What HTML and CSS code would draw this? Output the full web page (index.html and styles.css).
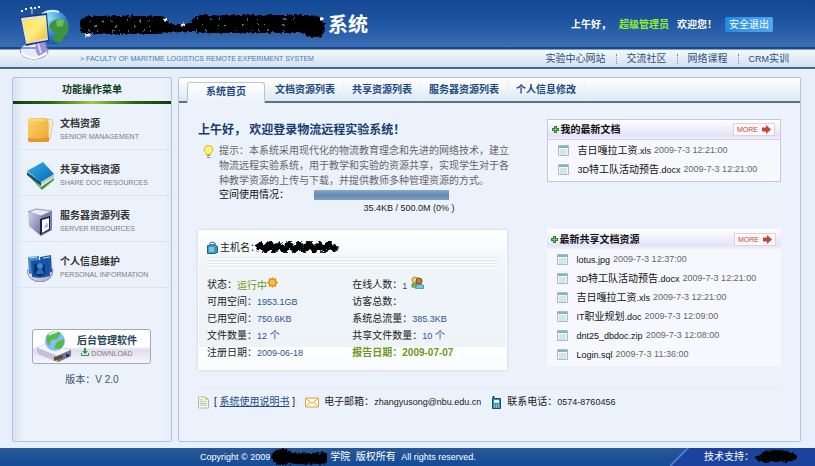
FILE: index.html
```html
<!DOCTYPE html>
<html lang="zh-CN">

<head>
    <meta charset="UTF-8">
    <meta name="viewport" content="width=device-width, initial-scale=1.0">
    <title>物流远程实验系统</title>
    <link rel="stylesheet" href="styles.css">
</head>

<body>
    <!-- Shared shapes -->
    <svg class="defs" width="0" height="0" aria-hidden="true">
        <defs>
            <filter id="rough" x="-5%" y="-50%" width="110%" height="200%">
                <feTurbulence type="fractalNoise" baseFrequency="0.35" numOctaves="2" seed="4" />
                <feDisplacementMap in="SourceGraphic" scale="5" xChannelSelector="R" yChannelSelector="G" />
            </filter>
            <linearGradient id="yellow" x1="0" y1="0" x2="1" y2="1">
                <stop offset="0" stop-color="#f8e24c" />
                <stop offset="0.5" stop-color="#ffec84" />
                <stop offset="1" stop-color="#f0b92a" />
            </linearGradient>
            <linearGradient id="folder" x1="0" y1="0" x2="1" y2="1">
                <stop offset="0" stop-color="#fbd36a" />
                <stop offset="1" stop-color="#eda52f" />
            </linearGradient>
            <radialGradient id="globe" cx="0.4" cy="0.25" r="0.8">
                <stop offset="0" stop-color="#9be3fa" />
                <stop offset="0.5" stop-color="#3b92d8" />
                <stop offset="1" stop-color="#14509c" />
            </radialGradient>
            <linearGradient id="metal" x1="0" y1="0" x2="1" y2="1">
                <stop offset="0" stop-color="#ffffff" />
                <stop offset="1" stop-color="#9a9fc4" />
            </linearGradient>
            <linearGradient id="server" x1="0" y1="0" x2="1" y2="1">
                <stop offset="0" stop-color="#d4d4ec" />
                <stop offset="1" stop-color="#6b6b9c" />
            </linearGradient>
            <linearGradient id="book" x1="0" y1="0" x2="1" y2="1">
                <stop offset="0" stop-color="#36b0ea" />
                <stop offset="1" stop-color="#0868b0" />
            </linearGradient>
            <symbol id="doc" viewBox="0 0 11 11">
                <path d="M.5.5h10v10H.5z" fill="#f4fafa" stroke="#a4bdc6" />
                <path d="M1 1h9v2H1z" fill="#7fb5c9" />
                <path d="M2 5h7M2 7h7M2 9h7" stroke="#b3d3d3" />
            </symbol>
            <symbol id="plus" viewBox="0 0 7 7">
                <path d="M2 0h3v2h2v3H5v2H2V5H0V2h2z" fill="#2b8430" />
                <path d="M3 1h1v2h2v1H4v2H3V4H1V3h2z" fill="#74c468" />
            </symbol>
            <symbol id="arrow" viewBox="0 0 9 9">
                <path d="M0 2.500h4V0l5 4.500L4 9V6.500H0z" fill="#c9452f" />
            </symbol>
        </defs>
    </svg>

    <header class="header">
        <svg class="logo" viewBox="0 0 52 58" aria-hidden="true">
            <circle cx="32" cy="22" r="17" fill="url(#globe)" />
            <path d="M31 17q7-5 14-2 5 6 3 12l-7 10q-6 2-8-3l2-6q-5-3-6-6z" fill="#3d9440" />
            <path d="M36 16q5-3 8-1l-1 6-6 1z" fill="#6dba58" />
            <path d="M22 9q8-5 17-2" fill="none" stroke="#c7f2ff" stroke-width="2" />
            <ellipse cx="14" cy="46" rx="14" ry="8" fill="#e6e9f7" stroke="#7d88b8" />
            <path d="M1 48q12 10 26 0" fill="none" stroke="#fff" stroke-width="2" />
            <path d="M0 43h28" stroke="#20488c" />
            <path d="M16 37l9-1 2 10-8 5q-5-4-3-14z" fill="#9c92d6" />
            <path d="M18 38l3 10" stroke="#dcd7f6" stroke-width="2" />
            <path d="M0 12l27-4 2 28-23 5z" fill="#1f3768" />
            <path d="M1 13l25-3 2 25-22 4z" fill="#d5dff2" />
            <path d="M3 15l22-3 2 21-20 5z" fill="url(#yellow)" />
            <path d="M12 9V3" stroke="#c4d4f0" />
            <path d="M1 6h2M5 4h2M10 3h2M14 3h2M18 2h2" stroke="#fff" stroke-width="2" />
        </svg>
        <div class="header-right">
            <div class="top">
                <h1 class="title">
                    <svg class="scribble" viewBox="0 0 246 28" aria-hidden="true">
                        <g filter="url(#rough)">
                            <path d="M8 14h72M120 13h110" fill="none" stroke="#000" stroke-width="18" stroke-linecap="round" />
                            <path d="M80 17h35" stroke="#000" stroke-width="8" />
                            <circle cx="234" cy="16" r="11" />
                            <path d="M84 9h3M101 14h4M5 24h5M240 8h3" stroke="#fff" stroke-width="3" />
                            <path d="M10 10h66M118 8h100" stroke="#a9bad8" stroke-dasharray="1 11 2 7 1 15" />
                            <path d="M14 15h60M122 14h90" stroke="#e8eef8" stroke-dasharray="2 13 1 6 1 17" />
                            <path d="M8 20h68M116 19h88" stroke="#a9bad8" stroke-dasharray="1 8 2 14 1 5" />
                        </g>
                    </svg>系统
                </h1>
                <div class="welcome">
                    <span>上午好，</span>
                    <span class="user">超级管理员</span>
                    <span>欢迎您！</span>
                    <button class="logout" type="button">安全退出</button>
                </div>
            </div>
            <div class="subbar">
                <p class="subtitle">&gt; FACULTY OF MARITIME LOGISTICS REMOTE EXPERIMENT SYSTEM</p>
                <nav class="links">
                    <a href="#">实验中心网站</a>
                    <a href="#">交流社区</a>
                    <a href="#">网络课程</a>
                    <a href="#"><span class="en">CRM</span>实训</a>
                </nav>
            </div>
        </div>
    </header>

    <div class="wrap">
        <!-- Left menu -->
        <aside class="sidebar">
            <h2 class="menu-title">功能操作菜单</h2>
            <a class="menu-item" href="#">
                <svg class="menu-icon" viewBox="0 0 28 28" aria-hidden="true">
                    <path d="M18 4l6-1 2 3-3 17-6 2z" fill="#f8f2df" stroke="#d6c69a" />
                    <path d="M22 5v8l-2 4" fill="none" stroke="#e6bd62" />
                    <path d="M1 4q0-2 2-2h15q3 0 3 2l1 20q0 2-2 2H3q-2 0-2-2z" fill="url(#folder)" />
                    <path d="M1 22q8 2 21-1v3q0 2-2 2H3q-2 0-2-2z" fill="#e3982c" />
                    <path d="M3 4h15" stroke="#ffe9a4" />
                </svg>
                <span>
                    <strong>文档资源</strong>
                    <small>SENIOR MANAGEMENT</small>
                </span>
            </a>
            <a class="menu-item" href="#">
                <svg class="menu-icon" viewBox="0 0 28 28" aria-hidden="true">
                    <path d="M2 14l13 14 12-10v-4L10 12z" fill="#4d9a35" />
                    <path d="M1 12l13 13 13-9v-4L9 7z" fill="#e9f3e2" />
                    <path d="M0 10v3l14 11v-4z" fill="#095182" />
                    <path d="M14 20l13-8v3l-13 8z" fill="#b8c8d2" />
                    <path d="M0 9L16 0l11 12-13 8z" fill="url(#book)" />
                </svg>
                <span>
                    <strong>共享文档资源</strong>
                    <small>SHARE DOC RESOURCES</small>
                </span>
            </a>
            <a class="menu-item" href="#">
                <svg class="menu-icon" viewBox="0 0 28 28" aria-hidden="true">
                    <path d="M1 4l8-3 16 2-11 5z" fill="#e8e8f8" stroke="#9292b6" />
                    <path d="M1 4l13 4v20L2 18z" fill="url(#server)" />
                    <path d="M14 8l11-5v19l-11 6z" fill="#7c7ba9" />
                    <path d="M13 11l10-3v14l-10 5z" fill="#1d213c" />
                    <path d="M15 12l7-2v11l-7 4z" fill="#f4f6ff" />
                    <path d="M17 20l3-6 1 5z" fill="#a9adc6" />
                </svg>
                <span>
                    <strong>服务器资源列表</strong>
                    <small>SERVER RESOURCES</small>
                </span>
            </a>
            <a class="menu-item" href="#">
                <svg class="menu-icon" viewBox="0 0 28 28" aria-hidden="true">
                    <path d="M0 16q13 5 26-1 0 12-13 13Q1 27 0 16z" fill="url(#metal)" stroke="#858da5" />
                    <path d="M1 3l11-1 1 17-11 1z" fill="#4686c6" />
                    <path d="M13 3l11-2 1 17-11 2z" fill="#1f59a2" />
                    <path d="M4 7l18-2 1 17q-9 3-18 1z" fill="#1454a8" />
                    <path d="M7 10l6-1 5 2v9l-5 3-6-3z" fill="#0b2f6e" />
                    <circle cx="13" cy="12" r="3" fill="#3d86cf" />
                    <path d="M9 20q1-5 4-5t4 5z" fill="#2a6cc0" />
                    <path d="M2 4l8-1M16 4l7-1" stroke="#b9dbf5" />
                </svg>
                <span>
                    <strong>个人信息维护</strong>
                    <small>PERSONAL INFORMATION</small>
                </span>
            </a>
            <button class="download" type="button">
                <svg class="download-icon" viewBox="0 0 35 33" aria-hidden="true">
                    <path d="M0 18l9-5 25 7v6l-13 6L1 23z" fill="#8585a8" />
                    <path d="M0 18l9-5 25 7-14 6z" fill="#f3f2fa" />
                    <path d="M0 18l20 8v6L1 24z" fill="#c4c2d8" />
                    <path d="M20 26l14-6v6l-13 6z" fill="#77769a" />
                    <path d="M17 27l9-2v3l-9 3z" fill="#604d26" />
                    <path d="M29 24h3v3h-3z" fill="#29334b" />
                    <circle cx="18" cy="11" r="10" fill="#8bbcf0" />
                    <path d="M10 5q8-6 14-2l-4 6-6 1-2 6q-4-5-2-11zM20 12l7-3q1 6-4 10l-6-1z" fill="#4fbd48" />
                    <path d="M12 5q4-3 8-3" fill="none" stroke="#d7ffd0" stroke-width="2" />
                </svg>
                <span>
                    <strong>后台管理软件</strong>
                    <small><svg width="8" height="8" viewBox="0 0 8 8" aria-hidden="true">
                            <path d="M3 0h2v3h2L4 6 1 3h2zM0 5h1v2h6V5h1v3H0z" fill="#329a42" />
                        </svg> DOWNLOAD</small>
                </span>
            </button>
            <p class="version">版本：V 2.0</p>
        </aside>

        <main class="main">
            <nav class="tabs">
                <a class="tab active" href="#">系统首页</a>
                <a class="tab" href="#">文档资源列表</a>
                <a class="tab" href="#">共享资源列表</a>
                <a class="tab" href="#">服务器资源列表</a>
                <a class="tab" href="#">个人信息修改</a>
            </nav>

            <div class="content">
                <div class="columns">
                    <section>
                        <h2 class="hello">上午好， 欢迎登录物流远程实验系统！</h2>
                        <div class="tip">
                            <svg class="bulb" viewBox="0 0 11 13" aria-hidden="true">
                                <path d="M5.500.5a4 4 0 0 1 3 7l-1 2h-4l-1-2a4 4 0 0 1 3-7z" fill="#fff36b" stroke="#cfb638" />
                                <path d="M4 10.500h3M4 12.500h3" stroke="#7e8795" />
                            </svg>
                            <div class="tip-body">
                                <p class="tip-text">提示：本系统采用现代化的物流教育理念和先进的网络技术，建立物流远程实验系统，用于教学和实验的资源共享，实现学生对于各种教学资源的上传与下载，并提供教师多种管理资源的方式。</p>
                                <div class="usage">
                                    <span>空间使用情况：</span>
                                    <span class="usage-bar"></span>
                                </div>
                                <p class="usage-text">35.4KB / 500.0M (0% )</p>
                            </div>
                        </div>

                        <div class="stats">
                            <div class="host">
                                <svg class="icon" viewBox="0 0 11 13" aria-hidden="true">
                                    <path d="M3 4V2q2-2 5 0v3" fill="none" stroke="#346687" />
                                    <path d="M.5 4.500l7-1 3 2v6l-3 1h-7z" fill="#399bc1" stroke="#245f80" />
                                    <path d="M2 6h5v5H2z" fill="#72c6df" />
                                </svg>
                                <span>主机名：</span>
                                <svg class="scribble-small" viewBox="0 0 88 12" aria-hidden="true">
                                    <path d="M2 7l5-3 4 5 5-6 4 6 5-5 5 5 5-6 5 6 5-5 5 5 5-6 5 6 5-5 5 5 5-6 5 5 3-3" fill="none" stroke="#000" stroke-width="6" filter="url(#rough)" />
                                </svg>
                            </div>
                            <div class="stripes"></div>
                            <dl class="stat-list">
                                <div>
                                    <dt>状态：</dt>
                                    <dd class="running">运行中<svg class="icon" viewBox="0 0 12 12" aria-hidden="true">
                                            <path d="M6 0l1.500 2L10 1v3l2 2-2 2v3l-2.500-1L6 12l-1.500-2L2 11V8L0 6l2-2V1l2.500 1z" fill="#e98a1b" />
                                            <circle cx="6" cy="6" r="3" fill="#ffc83d" />
                                        </svg></dd>
                                </div>
                                <div>
                                    <dt>在线人数：</dt>
                                    <dd><span class="en">1</span> <svg class="icon wide" viewBox="0 0 14 13" aria-hidden="true">
                                            <path d="M1 9q2-4 6-2l1 4-6 1z" fill="#68af58" />
                                            <circle cx="5" cy="4" r="3" fill="#f2d57c" stroke="#a18836" />
                                            <path d="M5 12q1-4 5-4t4 4q-5 2-9 0z" fill="#7fc3df" stroke="#4b8baa" />
                                            <circle cx="9" cy="5" r="3" fill="#c47c32" stroke="#75451d" />
                                        </svg></dd>
                                </div>
                                <div>
                                    <dt>可用空间：</dt>
                                    <dd><span class="en">1953.1GB</span></dd>
                                </div>
                                <div>
                                    <dt>访客总数：</dt>
                                    <dd></dd>
                                </div>
                                <div>
                                    <dt>已用空间：</dt>
                                    <dd><span class="en">750.6KB</span></dd>
                                </div>
                                <div>
                                    <dt>系统总流量：</dt>
                                    <dd><span class="en">385.3KB</span></dd>
                                </div>
                                <div>
                                    <dt>文件数量：</dt>
                                    <dd><span class="en">12</span> 个</dd>
                                </div>
                                <div>
                                    <dt>共享文件数量：</dt>
                                    <dd><span class="en">10</span> 个</dd>
                                </div>
                                <div>
                                    <dt>注册日期：</dt>
                                    <dd><span class="en">2009-06-18</span></dd>
                                </div>
                                <div class="report">
                                    <dt>报告日期：</dt>
                                    <dd>2009-07-07</dd>
                                </div>
                            </dl>
                        </div>
                    </section>

                    <section class="docs">
                        <div class="card bordered">
                            <div class="card-head">
                                <h3><svg class="plus" aria-hidden="true"><use href="#plus" /></svg>我的最新文档</h3>
                                <a class="more" href="#">MORE <svg class="arrow" aria-hidden="true"><use href="#arrow" /></svg></a>
                            </div>
                            <ul class="files">
                                <li><svg class="doc" aria-hidden="true"><use href="#doc" /></svg><a href="#">吉日嘎拉工资<span class="en">.xls</span></a> <time>2009-7-3 12:21:00</time></li>
                                <li><svg class="doc" aria-hidden="true"><use href="#doc" /></svg><a href="#"><span class="en">3D</span>特工队活动预告<span class="en">.docx</span></a> <time>2009-7-3 12:21:00</time></li>
                            </ul>
                        </div>

                        <div class="card">
                            <div class="card-head">
                                <h3><svg class="plus" aria-hidden="true"><use href="#plus" /></svg>最新共享文档资源</h3>
                                <a class="more" href="#">MORE <svg class="arrow" aria-hidden="true"><use href="#arrow" /></svg></a>
                            </div>
                            <ul class="files">
                                <li><svg class="doc" aria-hidden="true"><use href="#doc" /></svg><a href="#"><span class="en">lotus.jpg</span></a> <time>2009-7-3 12:37:00</time></li>
                                <li><svg class="doc" aria-hidden="true"><use href="#doc" /></svg><a href="#"><span class="en">3D</span>特工队活动预告<span class="en">.docx</span></a> <time>2009-7-3 12:21:00</time></li>
                                <li><svg class="doc" aria-hidden="true"><use href="#doc" /></svg><a href="#">吉日嘎拉工资<span class="en">.xls</span></a> <time>2009-7-3 12:21:00</time></li>
                                <li><svg class="doc" aria-hidden="true"><use href="#doc" /></svg><a href="#"><span class="en">IT</span>职业规划<span class="en">.doc</span></a> <time>2009-7-3 12:09:00</time></li>
                                <li><svg class="doc" aria-hidden="true"><use href="#doc" /></svg><a href="#"><span class="en">dnt25_dbdoc.zip</span></a> <time>2009-7-3 12:08:00</time></li>
                                <li><svg class="doc" aria-hidden="true"><use href="#doc" /></svg><a href="#"><span class="en">Login.sql</span></a> <time>2009-7-3 11:36:00</time></li>
                            </ul>
                        </div>
                    </section>
                </div>

                <div class="contact">
                    <div>
                        <svg class="icon" viewBox="0 0 12 13" aria-hidden="true">
                            <path d="M.5.5h8l3 3v9H.5z" fill="#fffbe2" stroke="#9fb3bd" />
                            <path d="M8 0v4h4z" fill="#e3c657" />
                            <path d="M2 3.500h4M2 5.500h7" stroke="#d6c46d" />
                            <path d="M2 7.500h8M2 9.500h8" stroke="#8fbdd0" />
                        </svg>
                        <span>[ <a class="manual" href="#">系统使用说明书</a> ]</span>
                    </div>
                    <div>
                        <svg class="icon wide" viewBox="0 0 14 12" aria-hidden="true">
                            <path d="M.5 1.500h13v9H.5z" fill="#fffbe9" stroke="#dba73d" />
                            <path d="M1 2l6 5 6-5M1 10l4-4M13 10L9 6" fill="none" stroke="#dba73d" />
                        </svg>
                        <span>电子邮箱：<span class="en">zhangyusong@nbu.edu.cn</span></span>
                    </div>
                    <div>
                        <svg class="icon" viewBox="0 0 11 13" aria-hidden="true">
                            <path d="M2.500 0v3" stroke="#174e70" stroke-width="2" />
                            <path d="M1.500 2.500h8v10h-8z" fill="#3a8db5" stroke="#174e70" />
                            <path d="M3 4h5v3H3z" fill="#e1f5fa" />
                            <path d="M3 9h5M3 11h5" stroke="#d0ecf5" stroke-dasharray="1 1" />
                        </svg>
                        <span>联系电话：<span class="en">0574-8760456</span></span>
                    </div>
                </div>
            </div>
        </main>
    </div>

    <footer class="footer">
        <p class="copyright">
            <span class="en">Copyright © 2009</span>
            <svg class="scribble-foot" viewBox="0 0 60 18" aria-hidden="true">
                <g filter="url(#rough)">
                    <ellipse cx="12" cy="9" rx="11" ry="8" />
                    <path d="M16 10l20 1 18-1" fill="none" stroke="#000" stroke-width="11" stroke-linecap="round" />
                </g>
            </svg>学院 &nbsp;版权所有 &nbsp;<span class="en">All rights reserved.</span>
        </p>
        <p class="support">
            技术支持：
            <svg class="scribble-foot short" viewBox="0 0 44 18" aria-hidden="true">
                <g filter="url(#rough)">
                    <ellipse cx="22" cy="8" rx="16" ry="6" />
                    <ellipse cx="10" cy="10" rx="9" ry="4" />
                    <ellipse cx="34" cy="9" rx="9" ry="5" />
                </g>
            </svg>
        </p>
    </footer>
</body>

</html>
```

FILE: styles.css
```css
* {
    box-sizing: border-box;
}

body {
    display: flex;
    flex-direction: column;
    min-height: 100vh;
    margin: 0;
    font-family: "Liberation Sans", "Noto Sans CJK SC", sans-serif;
    font-size: 10px;
    line-height: 15px;
    color: #222;
    background-color: #e7effb;
}

h1,
h2,
h3,
p,
ul,
dl,
dd {
    margin: 0;
    padding: 0;
}

a {
    color: inherit;
    text-decoration: none;
}

button {
    font-family: inherit;
    font-size: 10px;
    cursor: pointer;
}

svg {
    flex-shrink: 0;
}

.defs {
    position: absolute;
}

.en,
time {
    font-size: 9px;
}

.icon {
    width: 11px;
    height: 13px;
}

.icon.wide {
    width: 14px;
}

/* Header */
.header {
    display: flex;
    height: 69px;
    padding-left: 20px;
    background: linear-gradient(#124894 0, #1d53a0 20px, #3a6eb5 47px, #174a8a 47px, #174a8a 49px, #f3f8fb 50px, #d3e1f0 67px, #3e6697 67px);
}

.logo {
    width: 52px;
    height: 58px;
    margin-top: 5px;
}

.header-right {
    flex: 1;
}

.top {
    display: flex;
    justify-content: space-between;
    align-items: center;
    height: 49px;
    padding: 0 42px 0 8px;
}

.title {
    display: flex;
    align-items: center;
    font-size: 20px;
    line-height: 28px;
    color: #fff;
}

.scribble {
    width: 246px;
    height: 28px;
    margin-right: 2px;
}

.welcome {
    display: flex;
    align-items: center;
    gap: 8px;
    font-weight: bold;
    color: #fff;
}

.user {
    color: #8ff02c;
}

.logout {
    height: 15px;
    padding: 0 4px;
    line-height: 15px;
    color: #fff;
    border: 0;
    border-radius: 2px;
    background: linear-gradient(90deg, #2489e4, #50a8f0);
}

.subbar {
    display: flex;
    justify-content: space-between;
    align-items: center;
    height: 19px;
    padding: 0 16px 0 8px;
}

.subtitle {
    font-size: 7px;
    color: #4a78b8;
}

.links {
    display: flex;
    color: #2c4f7c;
}

.links a {
    padding: 0 10px;
    line-height: 10px;
    border-left: 1px dotted #6d8db4;
}

.links a:first-child {
    border-left: 0;
}

/* Page body */
.wrap {
    display: flex;
    flex: 1;
    gap: 6px;
    padding: 7px 14px 6px 12px;
    border-top: 1px solid #f8fcff;
}

.sidebar,
.main {
    border: 1px solid #b4c2dd;
    border-radius: 2px;
    background-color: #ecf2fb;
}

.sidebar {
    width: 160px;
    background: linear-gradient(90deg, #d5e2f3 0, #ecf2fb 10px, #ecf2fb 150px, #e4edf9 100%);
}

.menu-title {
    font-size: 10px;
    line-height: 23px;
    text-align: center;
    color: #0d3d1c;
    border-bottom: 3px solid;
    border-image: linear-gradient(90deg, #083f0b, #2e6a14 25%, #a0ca43 50%, #2e6a14 75%, #083f0b) 1;
}

.menu-item {
    display: flex;
    align-items: center;
    gap: 5px;
    height: 46px;
    padding: 6px 0 0 14px;
    border-bottom: 1px solid #dce4ef;
}

.menu-icon {
    width: 28px;
    height: 28px;
}

.menu-item strong,
.menu-item small,
.download strong,
.download small {
    display: block;
    line-height: 13px;
}

.menu-item strong {
    color: #333;
}

.menu-item small,
.download small {
    font-size: 7px;
    color: #7d7d7d;
}

.download {
    display: flex;
    align-items: center;
    gap: 5px;
    width: 119px;
    height: 35px;
    margin: 41px auto 8px 19px;
    padding: 0 4px;
    border: 1px solid #a5a8bb;
    border-radius: 3px;
    background: linear-gradient(#fff 50%, #dedcf0 60%, #f8f7fd);
}

.download-icon {
    width: 35px;
    height: 33px;
}

.download strong {
    color: #244457;
}

.version {
    text-align: center;
    color: #405266;
}

.main {
    flex: 1;
}

/* Tabs */
.tabs {
    display: flex;
    align-items: flex-end;
    height: 25px;
    padding-left: 8px;
    background: linear-gradient(#fff, #dce9f3);
    border-bottom: 2px solid #587489;
}

.tab {
    height: 20px;
    padding: 0 8px;
    font-weight: bold;
    line-height: 17px;
    color: #1d4a82;
    border-right: 1px solid #e8f1f8;
}

.tab.active {
    height: 21px;
    margin: 0 2px -2px 0;
    padding: 0 18px;
    border: 1px solid #b9c6d2;
    border-bottom: 0;
    border-radius: 3px 3px 0 0;
    background: linear-gradient(#fff, #ecf2fb);
}

.content {
    padding: 16px 19px 0;
}

.columns {
    display: grid;
    grid-template-columns: 4fr 3fr;
    gap: 36px;
}

.hello {
    font-size: 12px;
    line-height: 22px;
    color: #163c70;
}

.tip {
    display: flex;
    gap: 5px;
    padding: 2px 0 0 5px;
}

.bulb {
    width: 11px;
    height: 13px;
    margin-top: 2px;
}

.tip-body {
    flex: 1;
}

.tip-text {
    color: #666;
}

.usage {
    display: flex;
    align-items: center;
    gap: 25px;
    line-height: 14px;
    color: #111;
}

.usage-bar {
    width: 135px;
    height: 10px;
    background: linear-gradient(#88a8cb, #6488b2 50%, #7f9fc5);
}

.usage-text {
    padding-right: 56px;
    font-size: 9px;
    line-height: 12px;
    text-align: right;
}

.stats {
    margin: 16px 4px 0 0;
    padding: 6px 8px 8px;
    border: 1px solid #fff;
    box-shadow: 0 0 3px #c5ced9;
    background: linear-gradient(#fff, #eef4f7 40px, #edf3f6 116px, #fff 116px, #f8fbfd);
}

.host {
    display: flex;
    align-items: center;
    gap: 2px;
    height: 20px;
}

.host span {
    margin-right: -8px;
}

.scribble-small {
    width: 88px;
    height: 12px;
}

.stripes {
    height: 12px;
    margin-bottom: 7px;
    background: repeating-linear-gradient(#e3eaee 0, #e3eaee 1px, #f8fbfc 1px, #f8fbfc 3px);
}

.stat-list {
    display: grid;
    grid-template-columns: 1fr 1fr;
    line-height: 17px;
}

.stat-list div {
    display: flex;
    height: 17px;
}

.stat-list dd {
    color: #2b5294;
}

.stat-list .running {
    color: #6d9820;
}

.stat-list .report,
.stat-list .report dd {
    font-weight: bold;
    color: #6d9820;
}

/* Document lists */
.docs {
    display: flex;
    flex-direction: column;
    gap: 47px;
}

.card {
    background-color: #f6f8fd;
}

.bordered {
    border: 1px solid #c5cad8;
}

.card-head {
    display: flex;
    justify-content: space-between;
    align-items: center;
    height: 20px;
    padding: 0 5px 0 4px;
    background: linear-gradient(#fff, #e5e3f8 80%, #f0effb);
}

.bordered .card-head {
    border-bottom: 1px solid #d3d1e5;
}

.card-head h3 {
    display: flex;
    align-items: center;
    gap: 2px;
    font-size: 10px;
    color: #111;
}

.plus {
    width: 7px;
    height: 7px;
}

.more {
    display: flex;
    align-items: center;
    gap: 4px;
    padding: 0 3px;
    font-size: 7px;
    line-height: 11px;
    color: #c9452f;
    border: 1px solid #e6cfd2;
    background-color: #fdfafd;
}

.arrow {
    width: 9px;
    height: 9px;
}

.files {
    padding: 1px 0 2px 10px;
    list-style: none;
    line-height: 19px;
}

.files li {
    display: flex;
    align-items: center;
    gap: 3px;
    height: 19px;
    white-space: nowrap;
}

.files a {
    color: #111;
}

.doc {
    width: 11px;
    height: 11px;
    margin-right: 6px;
}

.files time {
    color: #666;
}

/* Contact line */
.contact {
    display: flex;
    gap: 10px;
    margin-top: 17px;
    padding-top: 5px;
    border-top: 1px solid #e2ebf5;
    line-height: 18px;
}

.contact div {
    display: flex;
    align-items: center;
    gap: 5px;
}

.manual {
    color: #1c4b85;
    text-decoration: underline;
}

/* Footer */
.footer {
    display: flex;
    justify-content: space-between;
    height: 18px;
    padding-left: 200px;
    line-height: 18px;
    color: #fff;
    background: linear-gradient(#285896, #134b98);
}

.footer p {
    display: flex;
    align-items: center;
}

.scribble-foot {
    width: 60px;
    height: 18px;
}

.scribble-foot.short {
    width: 44px;
}

.support {
    padding: 0 17px 0 34px;
    background: linear-gradient(135deg, transparent 12px, #4978c4 12px, #4978c4 14px, #1b429c 14px);
}
```
